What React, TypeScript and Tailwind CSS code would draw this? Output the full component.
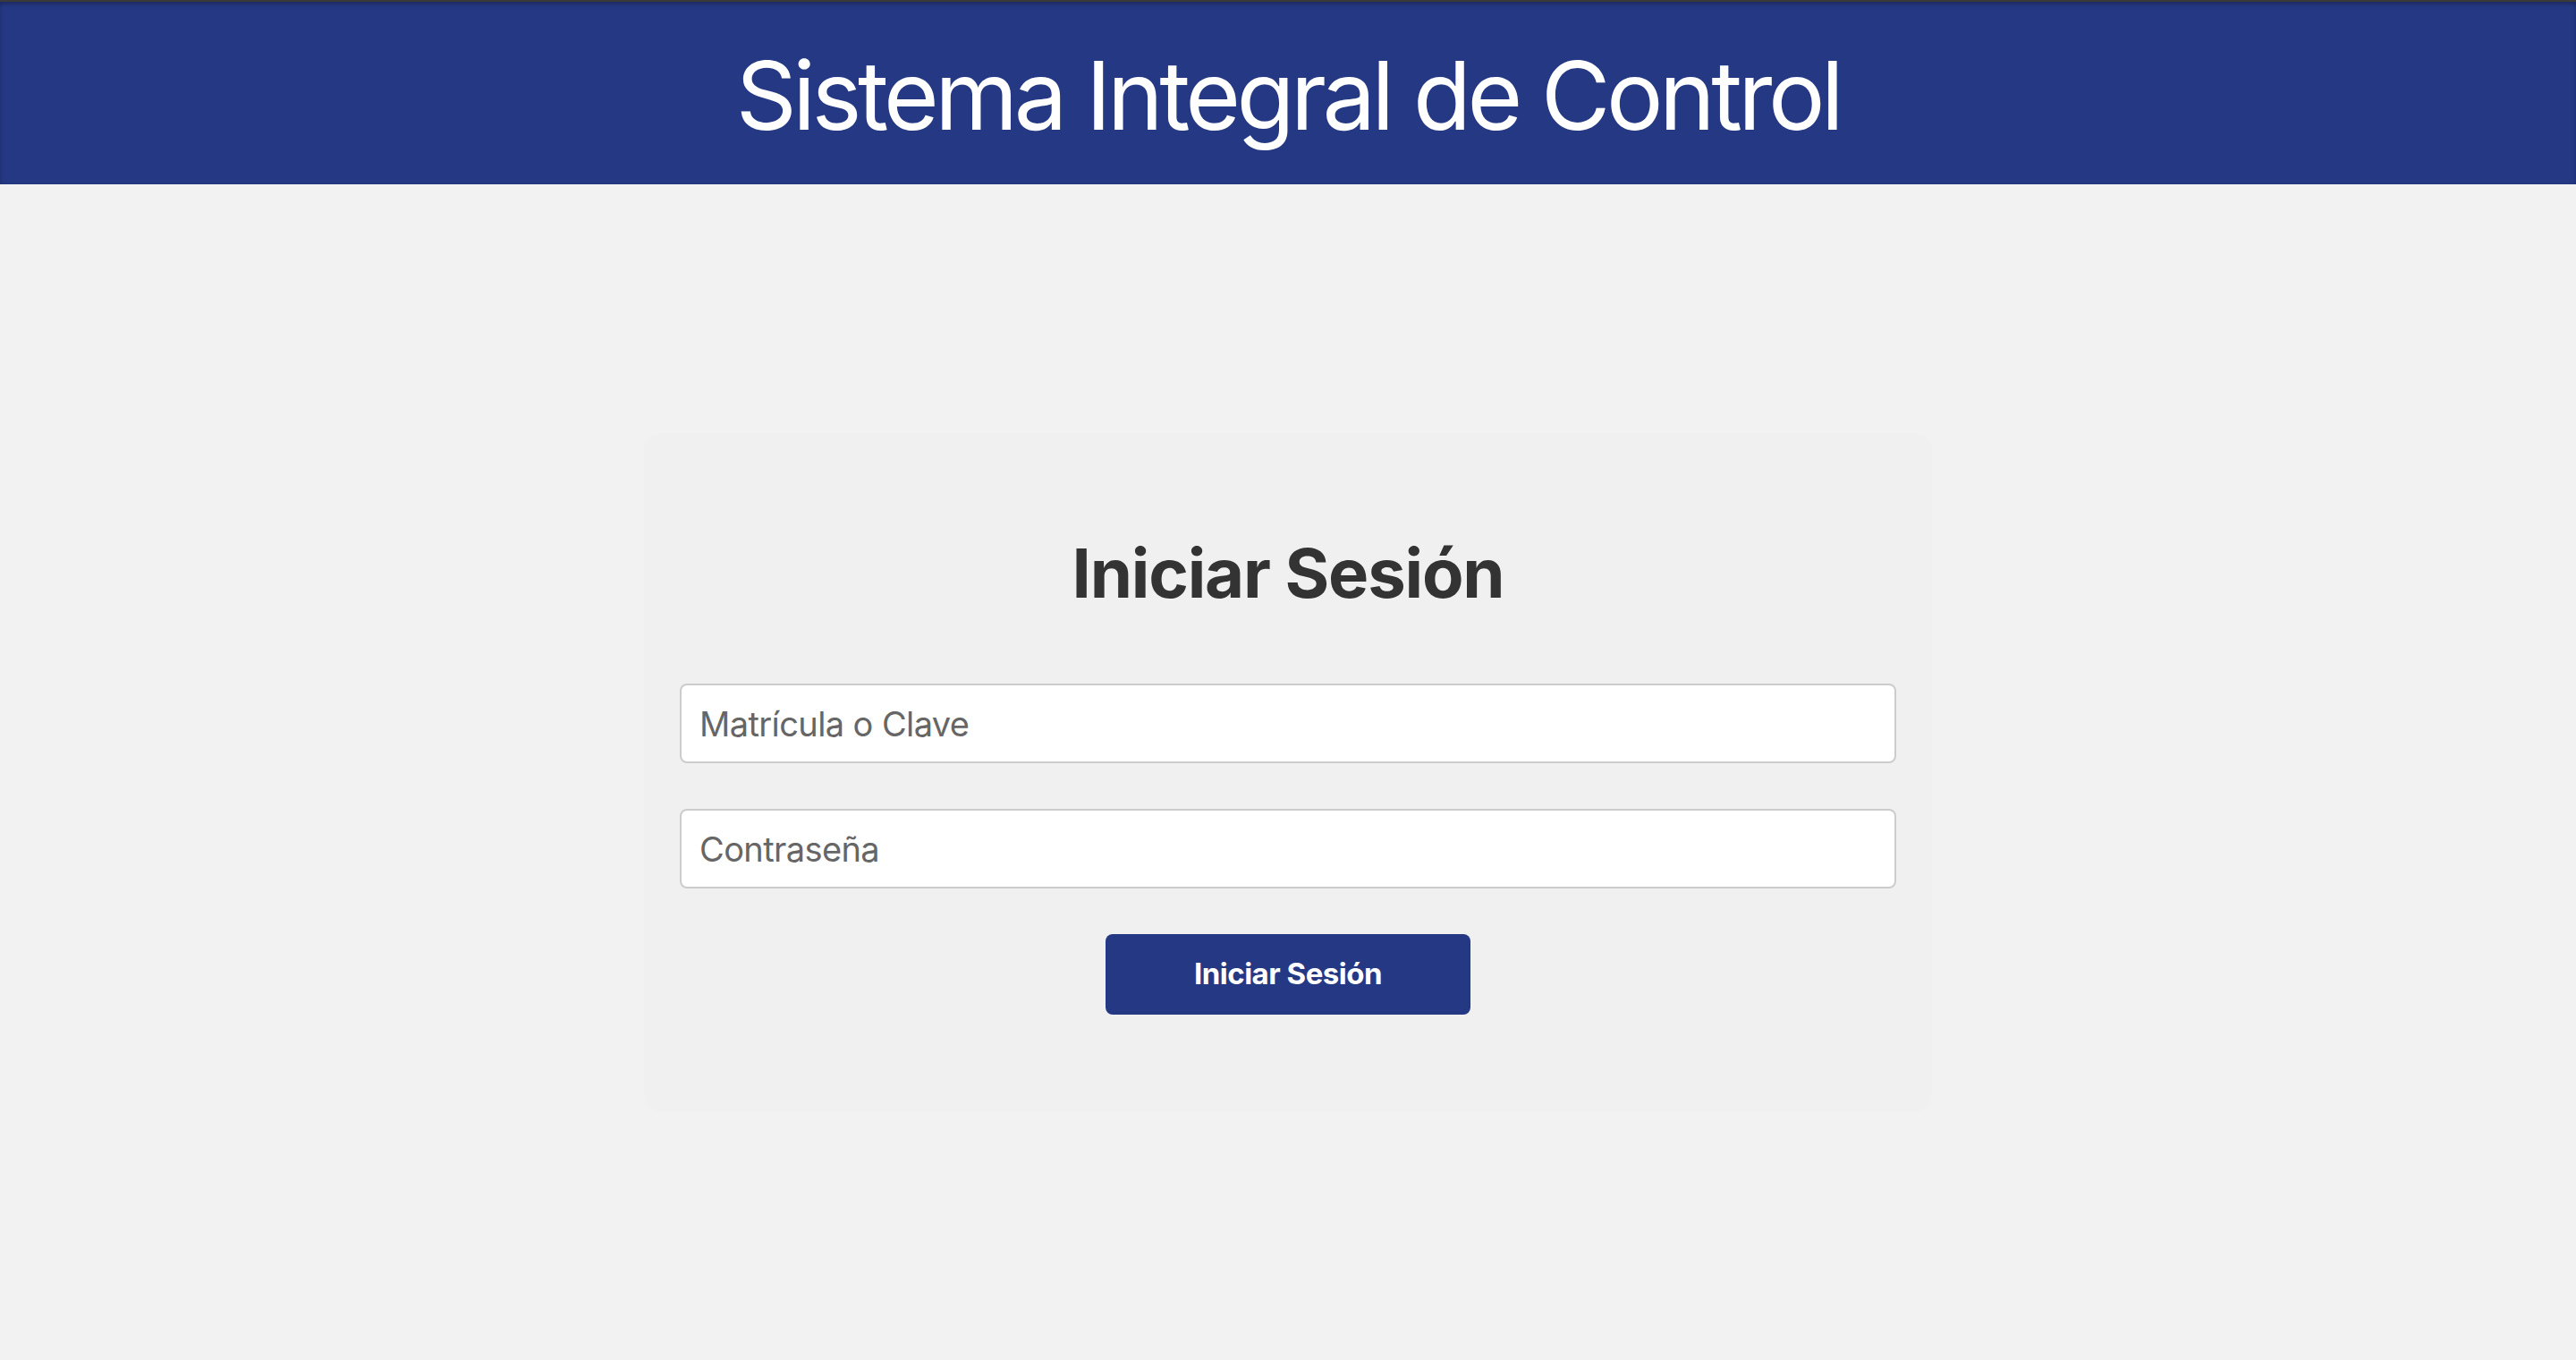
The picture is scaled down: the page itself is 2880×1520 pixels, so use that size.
import React from "react";

export default function App() {
  return (
    <div
      className="min-h-screen flex flex-col bg-[#f2f2f2]"
      style={{ fontFamily: "Inter, 'Noto Sans', 'Liberation Sans', sans-serif" }}
    >
      <header className="h-[206px] shrink-0 bg-[#253884] border-t-2 border-[#3a3a3a] shadow-[inset_0_3px_4px_rgba(0,0,0,0.25)] flex items-center justify-center pt-[6px]">
        <h1 className="text-white text-[106px] leading-none font-normal tracking-[-4.5px]">
          Sistema Integral de Control
        </h1>
      </header>
      <main className="flex-1 flex items-center justify-center">
        <div className="w-[1440px] bg-[#f0f0f0] rounded-[20px] px-[40px] pt-[118px] pb-[109px] flex flex-col items-center">
          <h2 className="text-[76px] leading-none font-bold text-[#333333] mb-[86px] tracking-[-1.2px]">
            Iniciar Sesión
          </h2>
          <input
            type="text"
            placeholder="Matrícula o Clave"
            className="w-full h-[89px] bg-white border-2 border-[#cccccc] rounded-[8px] px-[20px] pt-[2px] text-[38px] tracking-[-0.6px] text-[#333] placeholder:text-[#666666] outline-none mb-[51px]"
          />
          <input
            type="password"
            placeholder="Contraseña"
            className="w-full h-[89px] bg-white border-2 border-[#cccccc] rounded-[8px] px-[20px] pt-[2px] text-[38px] tracking-[-0.6px] text-[#333] placeholder:text-[#666666] outline-none mb-[51px]"
          />
          <button className="w-[408px] h-[90px] bg-[#253884] rounded-[8px] text-white font-bold text-[33px] tracking-[-0.5px]">
            Iniciar Sesión
          </button>
        </div>
      </main>
    </div>
  );
}
